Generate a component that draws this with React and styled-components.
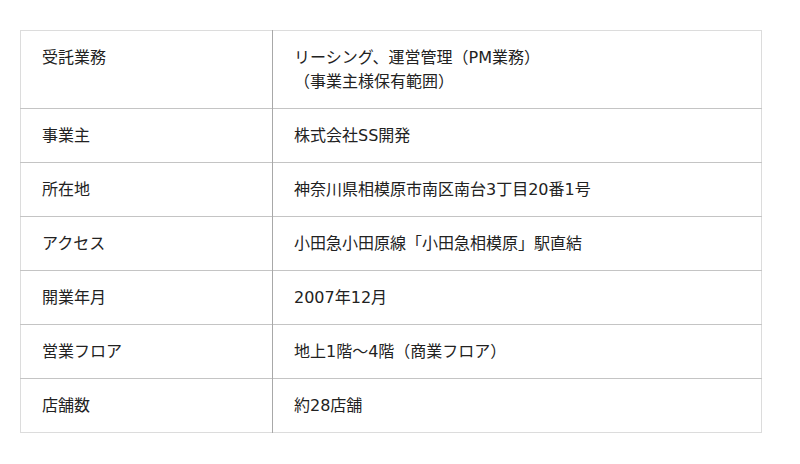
import React from 'react';
import styled, { createGlobalStyle } from 'styled-components';

const GlobalStyle = createGlobalStyle`
  body {
    margin: 0;
    background: #fff;
    font-family: "DejaVu Sans", "Noto Sans CJK JP", sans-serif;
    color: #222;
  }
`;

const Page = styled.div`
  padding: 30px 39px 0 20px;
`;

const Table = styled.table`
  width: 742px;
  border-collapse: collapse;
  border: 1px solid #dcdcdc;
  font-size: 16px;
  line-height: 24px;
`;

const Row = styled.tr`
  border-bottom: 1px solid #c4c4c4;
  &:last-child {
    border-bottom: 1px solid #dcdcdc;
  }
`;

const Label = styled.th`
  width: 252px;
  box-sizing: border-box;
  padding: 15px 21px ${(p) => (p.$tall ? 15 : 14)}px;
  text-align: left;
  font-weight: normal;
  vertical-align: top;
  border-right: 1px solid #a8a8a8;
`;

const Value = styled.td`
  padding: 15px 21px 14px;
  vertical-align: top;
`;

const rows = [
  ['受託業務', ['リーシング、運営管理（PM業務）', '（事業主様保有範囲）']],
  ['事業主', ['株式会社SS開発']],
  ['所在地', ['神奈川県相模原市南区南台3丁目20番1号']],
  ['アクセス', ['小田急小田原線「小田急相模原」駅直結']],
  ['開業年月', ['2007年12月']],
  ['営業フロア', ['地上1階～4階（商業フロア）']],
  ['店舗数', ['約28店舗']],
];

export default function App() {
  return (
    <Page>
      <GlobalStyle />
      <Table>
        <tbody>
          {rows.map(([label, lines]) => (
            <Row key={label}>
              <Label $tall={lines.length > 1}>{label}</Label>
              <Value>
                {lines.map((line, i) => (
                  <React.Fragment key={i}>
                    {i > 0 && <br />}
                    {line}
                  </React.Fragment>
                ))}
              </Value>
            </Row>
          ))}
        </tbody>
      </Table>
    </Page>
  );
}
